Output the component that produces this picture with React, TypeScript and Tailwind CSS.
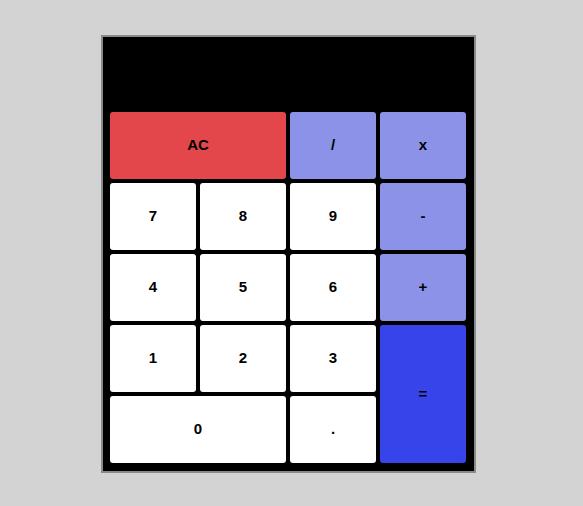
import React from 'react';

type Key = { label: string; className: string };

const keys: Key[] = [
  { label: 'AC', className: 'col-span-2 bg-[#e3474b] text-[#1a1a1a]' },
  { label: '/', className: 'bg-[#8c92e8]' },
  { label: 'x', className: 'bg-[#8c92e8]' },
  { label: '7', className: 'bg-white' },
  { label: '8', className: 'bg-white' },
  { label: '9', className: 'bg-white' },
  { label: '-', className: 'bg-[#8c92e8]' },
  { label: '4', className: 'bg-white' },
  { label: '5', className: 'bg-white' },
  { label: '6', className: 'bg-white' },
  { label: '+', className: 'bg-[#8c92e8]' },
  { label: '1', className: 'bg-white' },
  { label: '2', className: 'bg-white' },
  { label: '3', className: 'bg-white' },
  { label: '=', className: 'row-span-2 bg-[#3644ea] text-[#101040]' },
  { label: '0', className: 'col-span-2 bg-white' },
  { label: '.', className: 'bg-white' },
];

export default function App() {
  return (
    <div className="min-h-[506px] bg-[#d3d3d3] pt-[35px] pl-[101px] font-['Liberation_Sans',Arial,sans-serif]">
      <div className="w-[375px] h-[438px] border-2 border-[#8a8a8a] bg-black pl-[7px] pr-[8px]">
        {/* display */}
        <div className="h-[75px]" />

        {/* keypad */}
        <div className="grid grid-cols-[repeat(4,86px)] grid-rows-[repeat(5,67px)] gap-[4px]">
          {keys.map((k) => (
            <button
              key={k.label}
              className={`rounded-[3px] flex items-center justify-center text-[15px] font-bold text-black ${k.className}`}
            >
              {k.label}
            </button>
          ))}
        </div>
      </div>
    </div>
  );
}
